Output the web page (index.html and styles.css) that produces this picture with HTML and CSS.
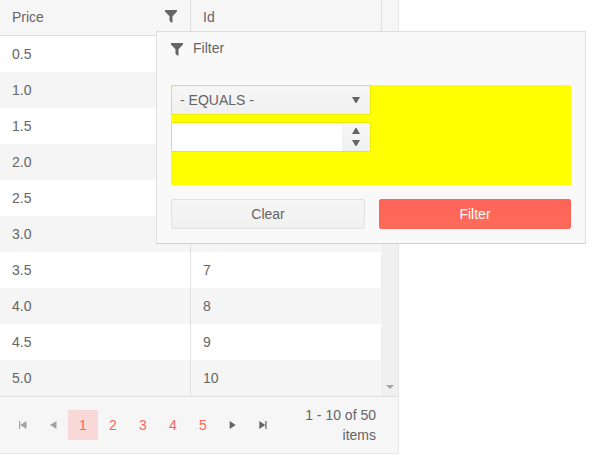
FILE: index.html
```html
<!DOCTYPE html>
<html lang="en">
<head>
<meta charset="utf-8">
<title>Grid filter</title>
<link rel="stylesheet" href="styles.css">
</head>
<body>
<div class="grid">
  <div class="grid-header">
    <div class="cell">Price
      <svg class="funnel" width="12" height="13" viewBox="0 0 12 13"><path d="M0 0h12v1.6L7.5 6.2V12.5H6.2L4.5 10.8V6.2L0 1.6z"/></svg>
    </div>
    <div class="cell">Id</div>
    <div class="gutter"></div>
  </div>
  <div class="grid-content">
    <div class="rows">
      <div class="row"><div class="cell">0.5</div><div class="cell"></div></div>
      <div class="row"><div class="cell">1.0</div><div class="cell"></div></div>
      <div class="row"><div class="cell">1.5</div><div class="cell"></div></div>
      <div class="row"><div class="cell">2.0</div><div class="cell"></div></div>
      <div class="row"><div class="cell">2.5</div><div class="cell"></div></div>
      <div class="row"><div class="cell">3.0</div><div class="cell"></div></div>
      <div class="row"><div class="cell">3.5</div><div class="cell">7</div></div>
      <div class="row"><div class="cell">4.0</div><div class="cell">8</div></div>
      <div class="row"><div class="cell">4.5</div><div class="cell">9</div></div>
      <div class="row"><div class="cell">5.0</div><div class="cell">10</div></div>
    </div>
    <div class="scrollbar"><svg width="8" height="4" viewBox="0 0 8 4"><path d="M0 0h8L4 4z"/></svg></div>
  </div>
  <div class="pager">
    <div class="page disabled"><svg width="8" height="8" viewBox="0 0 8 8"><path d="M0 0h1.2v8H0zM7.5 0v8L1.2 4z"/></svg></div>
    <div class="page disabled"><svg width="8" height="8" viewBox="0 0 8 8"><path d="M7.5 0v8L1 4z"/></svg></div>
    <div class="page selected">1</div>
    <div class="page">2</div>
    <div class="page">3</div>
    <div class="page">4</div>
    <div class="page">5</div>
    <div class="page arrow"><svg width="8" height="8" viewBox="0 0 8 8"><path d="M.7 0v8l6-4z"/></svg></div>
    <div class="page arrow"><svg width="8" height="8" viewBox="0 0 8 8"><path d="M.3 0v8l6-4zM6.3 0h1.2v8H6.3z"/></svg></div>
    <div class="info">1 - 10 of 50 items</div>
  </div>
</div>
<div class="popup">
  <div class="popup-title">
    <svg class="funnel" width="12" height="13" viewBox="0 0 12 13"><path d="M0 0h12v1.6L7.5 6.2V12.5H6.2L4.5 10.8V6.2L0 1.6z"/></svg>
    <span>Filter</span>
  </div>
  <div class="filter-body">
    <div class="dropdown"><span>- EQUALS -</span><svg width="8" height="6" viewBox="0 0 8 6"><path d="M0 0h8L4.5 6h-1z"/></svg></div>
    <div class="numeric">
      <div class="value"></div>
      <div class="spinner">
        <svg width="8" height="6" viewBox="0 0 8 6"><path d="M0 6h8L4.5 0h-1z"/></svg>
        <svg width="8" height="6" viewBox="0 0 8 6"><path d="M0 0h8L4.5 6h-1z"/></svg>
      </div>
    </div>
  </div>
  <div class="actions">
    <div class="button">Clear</div>
    <div class="button primary">Filter</div>
  </div>
</div>
</body>
</html>
```
FILE: styles.css
```css
* { box-sizing: border-box; }

body {
  margin: 0;
  background: #fff;
  color: #656565;
  font: 14px/20px "Liberation Sans", Arial, sans-serif;
}

svg { display: block; fill: currentColor; }

.grid {
  width: 399px;
  border: solid #e6e6e6;
  border-width: 0 1px 1px 0;
  background: #f6f6f6;
}

.grid-header {
  display: grid;
  grid-template-columns: 190px 191px 17px;
  height: 36px;
  border-bottom: 1px solid #e0e0e0;
}

.cell {
  display: flex;
  justify-content: space-between;
  padding: 8px 13px 8px 12px;
}

.cell + .cell,
.gutter { border-left: 1px solid #e0e0e0; }

.grid-header .cell { padding-top: 7px; }
.grid-header .funnel { margin-top: 3px; }

.grid-content {
  display: flex;
  height: 361px;
  border-bottom: 1px solid #e0e0e0;
}

.rows { width: 381px; background: #fff; }

.row {
  display: grid;
  grid-template-columns: 190px 191px;
  height: 36px;
}

.row:nth-child(even) { background: #f5f5f5; }

.scrollbar {
  display: flex;
  flex: 1;
  align-items: flex-end;
  justify-content: center;
  padding-bottom: 7px;
  background: #f0f0f0;
  color: #a3a3a3;
}

.pager {
  display: flex;
  align-items: center;
  height: 56px;
  padding: 0 22px 0 8px;
}

.page {
  display: flex;
  flex: none;
  align-items: center;
  justify-content: center;
  width: 30px;
  height: 30px;
  color: #ff6358;
}

.disabled { color: #a3a3a3; }
.arrow { color: #656565; }
.selected { background: #f9d9d7; }

.info { flex: 1; padding-left: 14px; text-align: right; }

.popup {
  position: absolute;
  top: 31px;
  left: 156px;
  width: 430px;
  height: 213px;
  padding: 6px 14px 14px;
  border: 1px solid #dedede;
  border-bottom-color: #d0d0d0;
  border-radius: 1px;
  background: #f9f9f9;
}

.popup-title { display: flex; height: 47px; gap: 10px; }
.popup-title .funnel { margin-top: 5px; }

.filter-body {
  display: flex;
  flex-direction: column;
  width: 400px;
  height: 100px;
  gap: 7px;
  background: #ff0;
}

.dropdown,
.numeric {
  display: flex;
  width: 200px;
  height: 30px;
  border: 1px solid #ebeb00;
  border-radius: 2px;
}

.dropdown {
  align-items: center;
  justify-content: space-between;
  padding: 0 10px 0 8px;
  background: linear-gradient(#f6f6f6, #f0f0f0);
}

.value { flex: 1; background: #fff; }

.spinner {
  display: flex;
  flex-direction: column;
  align-items: center;
  justify-content: center;
  gap: 6px;
  width: 28px;
  background: linear-gradient(#f6f6f6, #f0f0f0);
}

.actions {
  display: grid;
  grid-template-columns: 194px 192px;
  gap: 14px;
  margin-top: 14px;
}

.button {
  height: 30px;
  padding-top: 4px;
  border: 1px solid #e2e2e2;
  border-radius: 2px;
  background: linear-gradient(#f6f6f6, #f0f0f0);
  text-align: center;
}

.primary {
  border-color: #ff6358;
  background: linear-gradient(#ff6358, #ff6c5a);
  color: #fff;
}
```
